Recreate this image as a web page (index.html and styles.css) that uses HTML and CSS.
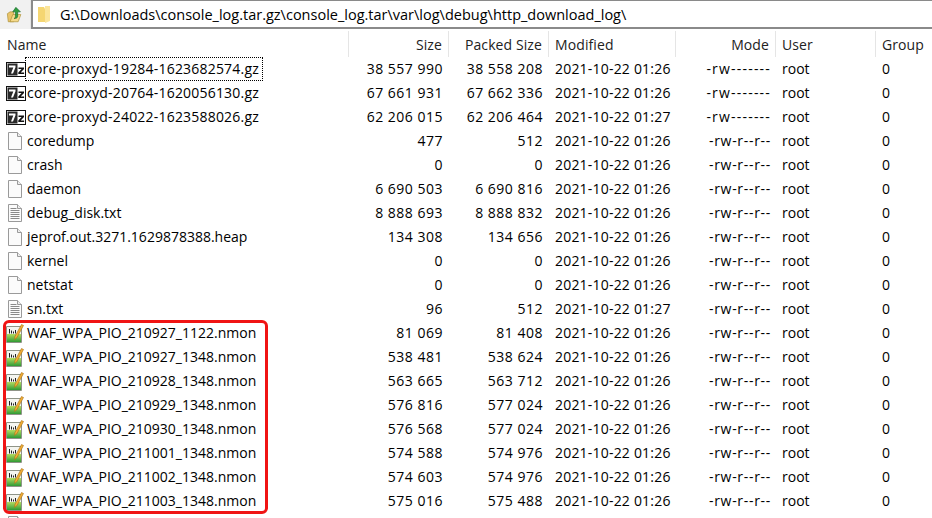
FILE: index.html
```html
<!DOCTYPE html>
<html lang="en">
<head>
<meta charset="utf-8">
<title>7-Zip File Manager</title>
<link rel="stylesheet" href="styles.css">
</head>
<body>
<svg class="defs" width="0" height="0" aria-hidden="true">
  <symbol id="i-7z" viewBox="0 0 20 15">
    <rect x="0.5" y="0.5" width="19" height="14" fill="#fff" stroke="#111"/>
    <rect x="1.500" y="1.500" width="10" height="12" fill="#2a2a2a"/>
    <path d="M3 3.500h6.500v1.800L7 11.500H5l2.300-6H3z" fill="#fff"/>
    <path d="M12.500 5.500h5.500v1.400l-3.300 3.500h3.400v1.600h-5.800v-1.400l3.300-3.500h-3.100z" fill="#111"/>
  </symbol>
  <symbol id="i-file" viewBox="0 0 14 18">
    <path d="M.5.500h9l4 4v13h-13z" fill="#fbfbfb" stroke="#9a9a9a"/>
    <path d="M9.500.500v4h4" fill="#eee" stroke="#9a9a9a"/>
  </symbol>
  <symbol id="i-txt" viewBox="0 0 14 18">
    <path d="M.5.500h9l4 4v13h-13z" fill="#fbfbfb" stroke="#9a9a9a"/>
    <path d="M9.500.500v4h4" fill="#eee" stroke="#9a9a9a"/>
    <path d="M2.500 4.500h6M2.500 6.500h9M2.500 8.500h9M2.500 10.500h9M2.500 12.500h9M2.500 14.500h9" stroke="#8a8a8a" fill="none"/>
  </symbol>
  <linearGradient id="g-nmon" x1="0" y1="0" x2="0" y2="1">
    <stop offset="0" stop-color="#b4dc62"/>
    <stop offset="1" stop-color="#2f9a34"/>
  </linearGradient>
  <symbol id="i-nmon" viewBox="0 0 18 19">
    <path d="M.5 2.500h15v16H.5z" fill="#f4f5f0" stroke="#8f9488"/>
    <rect x="1" y="10" width="14" height="8" fill="url(#g-nmon)"/>
    <path d="M3.500 5v4.500M5.500 6.500v3M7.500 7.500v2M9.500 6v3.500" stroke="#222" fill="none"/>
    <path d="M17.500 1.500L11 13.500l-2.500 2 .5-3.200L15.500.500z" fill="#f0ad35" stroke="#a8701a" stroke-width=".6"/>
  </symbol>
</svg>

<header class="pathbar">
  <button class="up" aria-label="Up one level">
    <svg width="18" height="18" viewBox="0 0 20 20">
      <path d="M1.500 8.500l3-2h4v11h-6z" fill="#e9c46a" stroke="#a88a30" stroke-width=".7"/>
      <path d="M4.500 17.500l3-8h9l-3 8z" fill="#f4d98a" stroke="#a88a30" stroke-width=".7"/>
      <path d="M11 1.500l5 5h-3v5c0 1.500-1.500 2.500-4 2.500 1-.5 1.500-1.300 1.500-2.500v-5H7.500z" fill="#2f9e3f" stroke="#14672a" stroke-width=".7"/>
    </svg>
  </button>
  <div class="address">
    <svg class="folder" width="13" height="17" viewBox="0 0 13 17">
      <path d="M0 1h6l1 2v13H0z" fill="#f5d672"/>
      <path d="M7 0h5v15l-5 2z" fill="#fbe59b"/>
    </svg>
    <span>G:\Downloads\console_log.tar.gz\console_log.tar\var\log\debug\http_download_log\</span>
  </div>
</header>

<main class="list">
  <div class="row head">
    <div class="name">Name</div>
    <div class="num">Size</div>
    <div class="num">Packed Size</div>
    <div class="date">Modified</div>
    <div class="num">Mode</div>
    <div class="user">User</div>
    <div class="group">Group</div>
  </div>

  <div class="row"><div class="name"><svg class="ic-7z"><use href="#i-7z"/></svg><span class="focus">core-proxyd-19284-1623682574.gz</span></div><div class="num">38 557 990</div><div class="num">38 558 208</div><div class="date">2021-10-22 01:26</div><div class="num">-rw-------</div><div class="user">root</div><div class="group">0</div></div>
  <div class="row"><div class="name"><svg class="ic-7z"><use href="#i-7z"/></svg><span class="label wide">core-proxyd-20764-1620056130.gz</span></div><div class="num">67 661 931</div><div class="num">67 662 336</div><div class="date">2021-10-22 01:26</div><div class="num">-rw-------</div><div class="user">root</div><div class="group">0</div></div>
  <div class="row"><div class="name"><svg class="ic-7z"><use href="#i-7z"/></svg><span class="label wide">core-proxyd-24022-1623588026.gz</span></div><div class="num">62 206 015</div><div class="num">62 206 464</div><div class="date">2021-10-22 01:27</div><div class="num">-rw-------</div><div class="user">root</div><div class="group">0</div></div>
  <div class="row"><div class="name"><svg class="ic-file"><use href="#i-file"/></svg><span class="label">coredump</span></div><div class="num">477</div><div class="num">512</div><div class="date">2021-10-22 01:26</div><div class="num">-rw-r--r--</div><div class="user">root</div><div class="group">0</div></div>
  <div class="row"><div class="name"><svg class="ic-file"><use href="#i-file"/></svg><span class="label">crash</span></div><div class="num">0</div><div class="num">0</div><div class="date">2021-10-22 01:26</div><div class="num">-rw-r--r--</div><div class="user">root</div><div class="group">0</div></div>
  <div class="row"><div class="name"><svg class="ic-file"><use href="#i-file"/></svg><span class="label">daemon</span></div><div class="num">6 690 503</div><div class="num">6 690 816</div><div class="date">2021-10-22 01:26</div><div class="num">-rw-r--r--</div><div class="user">root</div><div class="group">0</div></div>
  <div class="row"><div class="name"><svg class="ic-file"><use href="#i-txt"/></svg><span class="label">debug_disk.txt</span></div><div class="num">8 888 693</div><div class="num">8 888 832</div><div class="date">2021-10-22 01:26</div><div class="num">-rw-r--r--</div><div class="user">root</div><div class="group">0</div></div>
  <div class="row"><div class="name"><svg class="ic-file"><use href="#i-file"/></svg><span class="label">jeprof.out.3271.1629878388.heap</span></div><div class="num">134 308</div><div class="num">134 656</div><div class="date">2021-10-22 01:26</div><div class="num">-rw-r--r--</div><div class="user">root</div><div class="group">0</div></div>
  <div class="row"><div class="name"><svg class="ic-file"><use href="#i-file"/></svg><span class="label">kernel</span></div><div class="num">0</div><div class="num">0</div><div class="date">2021-10-22 01:26</div><div class="num">-rw-r--r--</div><div class="user">root</div><div class="group">0</div></div>
  <div class="row"><div class="name"><svg class="ic-file"><use href="#i-file"/></svg><span class="label">netstat</span></div><div class="num">0</div><div class="num">0</div><div class="date">2021-10-22 01:26</div><div class="num">-rw-r--r--</div><div class="user">root</div><div class="group">0</div></div>
  <div class="row"><div class="name"><svg class="ic-file"><use href="#i-txt"/></svg><span class="label">sn.txt</span></div><div class="num">96</div><div class="num">512</div><div class="date">2021-10-22 01:27</div><div class="num">-rw-r--r--</div><div class="user">root</div><div class="group">0</div></div>
  <div class="row"><div class="name"><svg class="ic-nmon"><use href="#i-nmon"/></svg><span class="label">WAF_WPA_PIO_210927_1122.nmon</span></div><div class="num">81 069</div><div class="num">81 408</div><div class="date">2021-10-22 01:26</div><div class="num">-rw-r--r--</div><div class="user">root</div><div class="group">0</div></div>
  <div class="row"><div class="name"><svg class="ic-nmon"><use href="#i-nmon"/></svg><span class="label">WAF_WPA_PIO_210927_1348.nmon</span></div><div class="num">538 481</div><div class="num">538 624</div><div class="date">2021-10-22 01:26</div><div class="num">-rw-r--r--</div><div class="user">root</div><div class="group">0</div></div>
  <div class="row"><div class="name"><svg class="ic-nmon"><use href="#i-nmon"/></svg><span class="label">WAF_WPA_PIO_210928_1348.nmon</span></div><div class="num">563 665</div><div class="num">563 712</div><div class="date">2021-10-22 01:26</div><div class="num">-rw-r--r--</div><div class="user">root</div><div class="group">0</div></div>
  <div class="row"><div class="name"><svg class="ic-nmon"><use href="#i-nmon"/></svg><span class="label">WAF_WPA_PIO_210929_1348.nmon</span></div><div class="num">576 816</div><div class="num">577 024</div><div class="date">2021-10-22 01:26</div><div class="num">-rw-r--r--</div><div class="user">root</div><div class="group">0</div></div>
  <div class="row"><div class="name"><svg class="ic-nmon"><use href="#i-nmon"/></svg><span class="label">WAF_WPA_PIO_210930_1348.nmon</span></div><div class="num">576 568</div><div class="num">577 024</div><div class="date">2021-10-22 01:26</div><div class="num">-rw-r--r--</div><div class="user">root</div><div class="group">0</div></div>
  <div class="row"><div class="name"><svg class="ic-nmon"><use href="#i-nmon"/></svg><span class="label">WAF_WPA_PIO_211001_1348.nmon</span></div><div class="num">574 588</div><div class="num">574 976</div><div class="date">2021-10-22 01:26</div><div class="num">-rw-r--r--</div><div class="user">root</div><div class="group">0</div></div>
  <div class="row"><div class="name"><svg class="ic-nmon"><use href="#i-nmon"/></svg><span class="label">WAF_WPA_PIO_211002_1348.nmon</span></div><div class="num">574 603</div><div class="num">574 976</div><div class="date">2021-10-22 01:26</div><div class="num">-rw-r--r--</div><div class="user">root</div><div class="group">0</div></div>
  <div class="row"><div class="name"><svg class="ic-nmon"><use href="#i-nmon"/></svg><span class="label">WAF_WPA_PIO_211003_1348.nmon</span></div><div class="num">575 016</div><div class="num">575 488</div><div class="date">2021-10-22 01:26</div><div class="num">-rw-r--r--</div><div class="user">root</div><div class="group">0</div></div>
  <div class="row"><div class="name"><svg class="ic-file"><use href="#i-file"/></svg></div></div>

  <div class="highlight"></div>
</main>
</body>
</html>
```
FILE: styles.css
```css
* { box-sizing: border-box; }
html, body { margin: 0; height: 100%; }
body {
  width: 932px;
  height: 518px;
  overflow: hidden;
  background: #fff;
  color: #000;
  font-family: "Open Sans", "Noto Sans", "Liberation Sans", sans-serif;
  font-size: 14px;
}
.defs { position: absolute; }

.pathbar {
  display: flex;
  height: 30px;
  background: #fff;
}
.up {
  width: 31px;
  height: 29px;
  padding: 0 0 0 6px;
  border: 0;
  border-right: 1px solid #e6e6e6;
  background: #f1f1f1;
  display: flex;
  align-items: center;
  justify-content: flex-start;
}
.address {
  flex: 1;
  display: flex;
  align-items: center;
  gap: 9px;
  height: 29px;
  padding-left: 5px;
  border-top: 1px solid #8a8a8a;
  border-left: 2px solid #8a8a8a;
  border-bottom: 2px solid #8a8a8a;
  font-size: 14.500px;
  white-space: nowrap;
}

.list {
  position: relative;
  padding-top: 1px;
}
.row {
  display: grid;
  grid-template-columns: 349px 100px 100px 127px 100px 100px 56px;
  height: 24px;
  line-height: 24px;
  white-space: nowrap;
}
.head {
  height: 26px;
  color: #222;
}
.head > div {
  height: 26px;
  line-height: 27px;
  border-right: 1px solid #e5e5e5;
  letter-spacing: .1px;
}
.head > div:last-child { border-right: 0; }

.name {
  display: flex;
  align-items: center;
  padding-left: 6px;
}
.head .name { padding-left: 7px; }
.num { text-align: right; padding-right: 6px; letter-spacing: .5px; }
.head .num { letter-spacing: .1px; }
.date { padding-left: 6px; letter-spacing: .2px; }
.user { padding-left: 6px; }
.group { padding-left: 6px; }
.row:not(.head) > :nth-child(5) { letter-spacing: .7px; padding-right: 5px; }
.row:nth-child(-n+4):not(.head) > :nth-child(5) { letter-spacing: 1.200px; }

.ic-7z { width: 20px; height: 15px; flex: none; }
.ic-file { width: 14px; height: 18px; margin: 0 4px 0 2px; flex: none; }
.ic-nmon { width: 18px; height: 19px; margin-right: 2px; flex: none; }

.label, .focus {
  padding: 0 1px;
  line-height: 22px;
  border: 1px dotted transparent;
}
.label { margin-left: -1px; }
.wide { letter-spacing: .2px; }
.focus {
  margin-left: -1px;
  border-color: #000;
  padding-right: 3px;
  letter-spacing: .2px;
}

.highlight {
  position: absolute;
  left: 3px;
  top: 290px;
  width: 265px;
  height: 194px;
  border: 3px solid #f01414;
  border-radius: 6px;
  pointer-events: none;
}
```
